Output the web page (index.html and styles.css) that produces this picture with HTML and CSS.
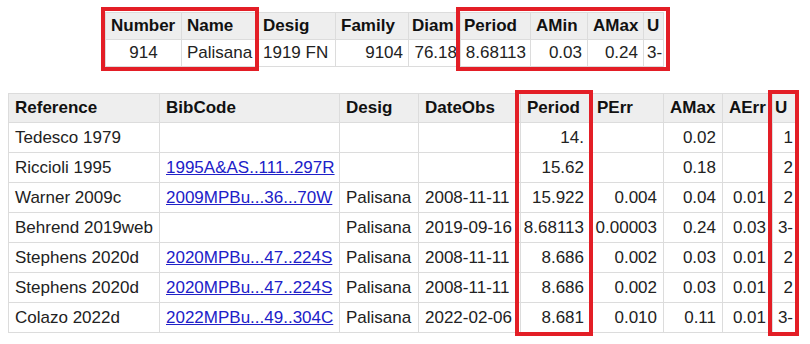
FILE: index.html
```html
<!DOCTYPE html>
<html>
<head>
<meta charset="utf-8">
<link rel="stylesheet" href="styles.css">
</head>
<body>
<div class="page">
  <div class="top-wrap">
    <table class="grid top">
      <thead>
        <tr>
          <th class="t-num">Number</th>
          <th class="t-name">Name</th>
          <th class="t-desig">Desig</th>
          <th class="t-fam">Family</th>
          <th class="t-diam">Diam</th>
          <th class="t-per">Period</th>
          <th class="t-amin">AMin</th>
          <th class="t-amax">AMax</th>
          <th class="t-u">U</th>
        </tr>
      </thead>
      <tbody>
        <tr>
          <td class="c">914</td>
          <td>Palisana</td>
          <td>1919 FN</td>
          <td class="r">9104</td>
          <td class="r">76.18</td>
          <td class="r">8.68113</td>
          <td class="r">0.03</td>
          <td class="r">0.24</td>
          <td>3-</td>
        </tr>
      </tbody>
    </table>
  </div>

  <table class="grid bottom">
    <thead>
      <tr>
        <th class="b-ref">Reference</th>
        <th class="b-bib">BibCode</th>
        <th class="b-desig">Desig</th>
        <th class="b-date">DateObs</th>
        <th class="b-per">Period</th>
        <th class="b-perr">PErr</th>
        <th class="b-amax">AMax</th>
        <th class="b-aerr">AErr</th>
        <th class="b-u">U</th>
      </tr>
    </thead>
    <tbody>
      <tr>
        <td>Tedesco 1979</td><td></td><td></td><td></td>
        <td class="r">14.</td><td class="r"></td><td class="r">0.02</td><td class="r"></td><td class="r">1</td>
      </tr>
      <tr>
        <td>Riccioli 1995</td><td><a href="#">1995A&amp;AS..111..297R</a></td><td></td><td></td>
        <td class="r">15.62</td><td class="r"></td><td class="r">0.18</td><td class="r"></td><td class="r">2</td>
      </tr>
      <tr>
        <td>Warner 2009c</td><td><a href="#">2009MPBu...36...70W</a></td><td>Palisana</td><td>2008-11-11</td>
        <td class="r">15.922</td><td class="r">0.004</td><td class="r">0.04</td><td class="r">0.01</td><td class="r">2</td>
      </tr>
      <tr>
        <td>Behrend 2019web</td><td></td><td>Palisana</td><td>2019-09-16</td>
        <td class="r">8.68113</td><td class="r">0.00003</td><td class="r">0.24</td><td class="r">0.03</td><td class="r">3-</td>
      </tr>
      <tr>
        <td>Stephens 2020d</td><td><a href="#">2020MPBu...47..224S</a></td><td>Palisana</td><td>2008-11-11</td>
        <td class="r">8.686</td><td class="r">0.002</td><td class="r">0.03</td><td class="r">0.01</td><td class="r">2</td>
      </tr>
      <tr>
        <td>Stephens 2020d</td><td><a href="#">2020MPBu...47..224S</a></td><td>Palisana</td><td>2008-11-11</td>
        <td class="r">8.686</td><td class="r">0.002</td><td class="r">0.03</td><td class="r">0.01</td><td class="r">2</td>
      </tr>
      <tr>
        <td>Colazo 2022d</td><td><a href="#">2022MPBu...49..304C</a></td><td>Palisana</td><td>2022-02-06</td>
        <td class="r">8.681</td><td class="r">0.010</td><td class="r">0.11</td><td class="r">0.01</td><td class="r">3-</td>
      </tr>
    </tbody>
  </table>

  <div class="mark mark-a"></div>
  <div class="mark mark-b"></div>
  <div class="mark mark-c"></div>
  <div class="mark mark-d"></div>
</div>
</body>
</html>
```

FILE: styles.css
```css
* { box-sizing: border-box; }

html, body {
  margin: 0;
  padding: 0;
  background: #ffffff;
}

body {
  font-family: "Liberation Sans", Arial, sans-serif;
  font-size: 17px;
  color: #222222;
}

.page {
  position: relative;
  padding: 12px 13px 0 8px;
  width: 810px;
  height: 344px;
}

.top-wrap {
  padding-left: 97px;
}

.grid {
  border-collapse: collapse;
  table-layout: fixed;
}

.grid th,
.grid td {
  border: 1px solid #dcdcdc;
  white-space: nowrap;
  overflow: visible;
  text-align: left;
}

.grid th {
  background: #eeeeee;
  font-weight: bold;
  color: #111111;
}

.grid .r { text-align: right; }
.grid .c { text-align: center; }

/* top summary table */
.top { width: 558px; }
.top th,
.top td {
  padding: 4px 5px;
  line-height: 18px;
}
.t-num { width: 76px; }
.t-name { width: 76px; }
.t-desig { width: 78px; }
.t-fam { width: 73px; }
.t-diam { width: 52px; }
.t-per { width: 70px; }
.t-amin { width: 57px; }
.t-amax { width: 56px; }
.t-u { width: 20px; }
.top .t-u { padding: 4px 3px; }
.top td:last-child { padding: 4px 3px; }
.top .t-per, .top td:nth-child(6) { padding-left: 3px; padding-right: 4px; }
.top .t-diam, .top td:nth-child(5) { padding-left: 3px; padding-right: 3px; }

/* bottom reference table */
.bottom {
  width: 789px;
  margin-top: 26px;
}
.bottom th {
  padding: 5px 6px;
  line-height: 18px;
}
.bottom td {
  padding: 5px 6px;
  line-height: 19px;
}
.bottom td.r:nth-child(5),
.bottom td.r:nth-child(6) { padding-left: 2px; }
.bottom td:last-child,
.bottom th:last-child { padding-left: 2px; padding-right: 4px; }

.b-ref { width: 151px; }
.b-bib { width: 180px; }
.b-desig { width: 79px; }
.b-date { width: 102px; }
.b-per { width: 70px; }
.b-perr { width: 73px; }
.b-amax { width: 59px; }
.b-aerr { width: 50px; }
.b-u { width: 25px; }

.bottom a {
  color: #2020c8;
  text-decoration: underline;
}

/* red highlight frames drawn over the tables */
.mark {
  position: absolute;
  border: 4px solid #e31e26;
}
.mark-a { left: 101px; top: 7px; width: 158px; height: 64px; }
.mark-b { left: 456px; top: 7px; width: 214px; height: 64px; }
.mark-c { left: 515px; top: 90px; width: 78px; height: 246px; }
.mark-d { left: 768px; top: 90px; width: 31px; height: 246px; }
```
